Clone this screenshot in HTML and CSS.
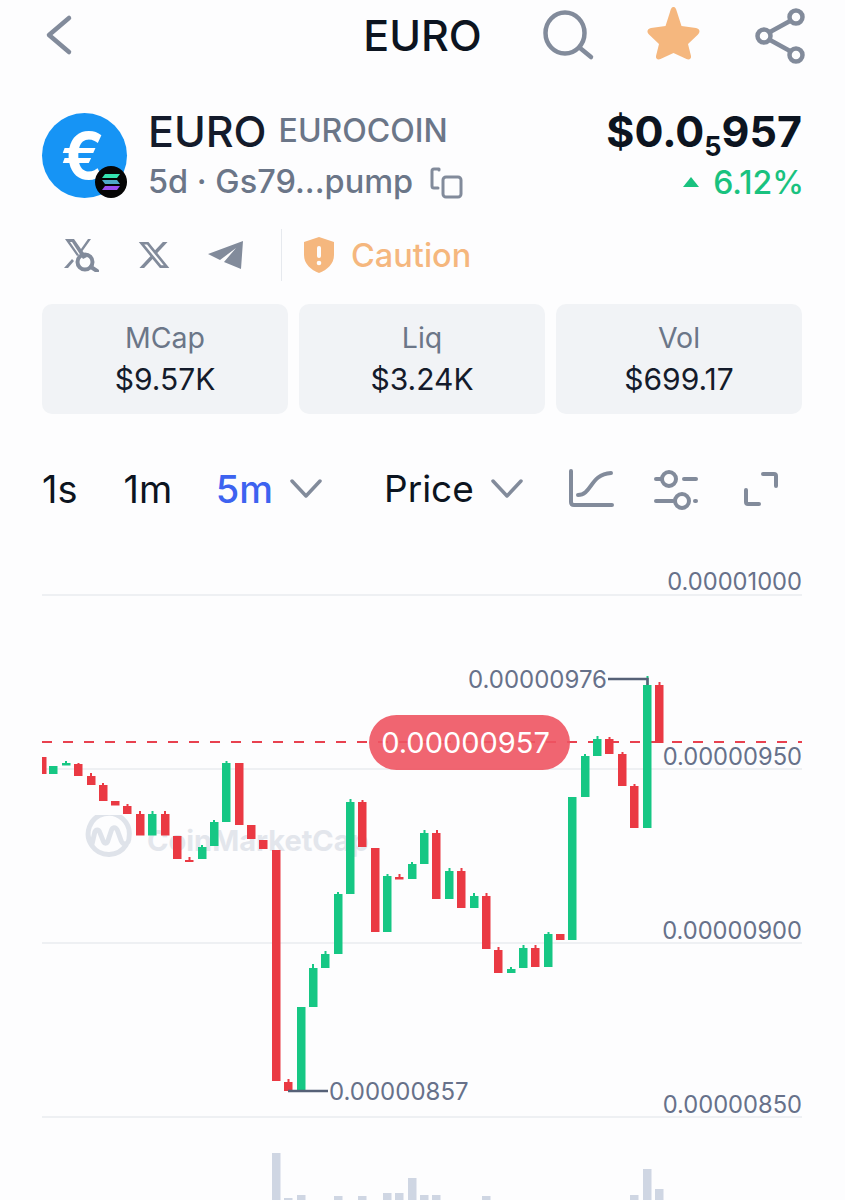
FILE: index.html
```html
<!DOCTYPE html>
<html lang="en">
<head>
<meta charset="utf-8">
<title>EURO</title>
<link rel="stylesheet" href="styles.css">
</head>
<body>
<div class="page">
  <header class="topbar">
    <svg class="ico back" viewBox="44 12 30 46"><polyline points="69,18 49,35 69,52"/></svg>
    <h1 class="title">EURO</h1>
    <div class="top-actions">
      <svg class="ico search" viewBox="540 8 56 54"><ellipse cx="565" cy="33" rx="19.5" ry="20.5"/><line x1="580" y1="48" x2="591" y2="57"/></svg>
      <svg class="star" viewBox="645 8 57 56"><path d="M673.500 8 C675 8 676 9 677 13 L681.500 27 L696 29 C700 30 700.500 33 698 35.500 L688 45 L691 57 C691.500 60 689 61 686.500 60 L673.500 54 L660.500 60 C658 61 655.500 60 656 57 L659 45 L649 35.500 C646.500 33 647 30 651 29 L665.500 27 L670 13 C671 9 672 8 673.500 8 Z"/></svg>
      <svg class="ico share" viewBox="752 4 54 60"><circle cx="796" cy="16" r="6.500"/><circle cx="764" cy="35" r="6.500"/><circle cx="796" cy="54" r="6.500"/><line x1="790" y1="20" x2="770" y2="31"/><line x1="770" y1="39" x2="790" y2="50"/></svg>
    </div>
  </header>

  <section class="token">
    <div class="avatar">
      <span class="euro">€</span>
      <svg class="chain" viewBox="0 0 32 32">
        <circle cx="16" cy="16" r="16" fill="#050505"/>
        <path d="M10 8 H25 L22 12 H7 Z" fill="#35e3b0"/>
        <path d="M7 14 H22 L25 18 H10 Z" fill="#4fa8c8"/>
        <path d="M10 20 H25 L22 24 H7 Z" fill="#9a4ff0"/>
      </svg>
    </div>
    <div class="token-info">
      <div class="name-row"><span class="sym">EURO</span><span class="full">EUROCOIN</span></div>
      <div class="addr-row">
        <span class="addr">5d · Gs79...pump</span>
        <svg class="ico copy" viewBox="429 165 35 34"><rect x="443" y="177" width="18" height="20" rx="3"/><path d="M439 170 V169 H434 Q432 169 432 171 V186 Q432 188 434 188 H438"/></svg>
      </div>
    </div>
    <div class="quote">
      <div class="price">$0.0<sub class="zeros">5</sub>957</div>
      <div class="change"><svg class="tri" viewBox="0 0 18 12"><path d="M9 1 L17 11 H1 Z"/></svg><span>6.12%</span></div>
    </div>
  </section>

  <section class="links">
    <svg class="fill-ico xq" viewBox="0 0 35 34">
      <path d="M1 1 H10 L17 11 L24 1 H27 L18.500 13 L23 19 L19 21 L8 4 H6 L15 17 L13 18 Z"/>
      <path d="M0 30 L8 21 L10 23 L4 30 Z"/>
      <circle class="ring" cx="21" cy="24" r="7.500"/>
      <line class="ring" x1="27" y1="29" x2="33" y2="33"/>
    </svg>
    <svg class="fill-ico x" viewBox="0 0 24 24" preserveAspectRatio="none"><path d="M18.244 2.250h3.308l-7.227 8.260 8.502 11.240H16.170l-5.214-6.817L4.990 21.750H1.680l7.730-8.835L1.254 2.250H8.080l4.713 6.231zm-1.161 17.520h1.833L7.084 4.126H5.117z"/></svg>
    <svg class="fill-ico tg" viewBox="207 243 38 30"><path d="M243 244 L208 257 L220 263 L236 251 L224 265 L241 272 Z"/></svg>
    <span class="sep"></span>
    <svg class="shield" viewBox="0 0 32 36"><path d="M16 0 L31 5 V18 C31 27 24 33 16 36 C8 33 1 27 1 18 V5 Z"/><rect class="mark" x="14" y="9" width="4" height="12" rx="2"/><circle class="mark" cx="16" cy="26" r="2.300"/></svg>
    <span class="caution">Caution</span>
  </section>

  <section class="stats">
    <div class="stat"><span class="stat-label">MCap</span><span class="stat-value">$9.57K</span></div>
    <div class="stat"><span class="stat-label">Liq</span><span class="stat-value">$3.24K</span></div>
    <div class="stat"><span class="stat-label">Vol</span><span class="stat-value">$699.17</span></div>
  </section>

  <nav class="tabs">
    <span class="tab t-1s">1s</span>
    <span class="tab t-1m">1m</span>
    <span class="tab active">5m</span>
    <svg class="ico chev c-5m" viewBox="0 0 32 20"><polyline points="2,2 16,17 30,2"/></svg>
    <span class="tab t-price">Price</span>
    <svg class="ico chev c-price" viewBox="0 0 32 20"><polyline points="2,2 16,17 30,2"/></svg>
    <svg class="ico tool curve" viewBox="568 468 48 40"><path d="M571 470 V501 Q571 504 574 504 H612"/><path d="M578 494 C592 494 590 473 611 472"/></svg>
    <svg class="ico tool sliders" viewBox="652 466 48 42"><line x1="656" y1="477" x2="661" y2="477"/><circle cx="669" cy="477" r="7"/><line x1="684" y1="477" x2="696" y2="477"/><line x1="656" y1="499" x2="673" y2="499"/><circle cx="682" cy="499" r="7"/><line x1="695" y1="499" x2="696" y2="499"/></svg>
    <svg class="ico tool expand" viewBox="742 469 38 38"><path d="M763 473 H774 Q776 473 776 475 V485"/><path d="M746 489 V501 Q746 503 748 503 H759"/></svg>
  </nav>

  <div class="chart">
    <svg class="watermark-logo" viewBox="0 0 48 48"><path d="M42 30 A21 21 0 1 1 45 22 C45 30 39 31 37 26 L33 15 C31 11 28 12 27 15 L23 27 C22 29 20 29 19 27 L15 17 C14 14 11 14 10 17 L7 30"/></svg>
    <span class="watermark-text">CoinMarketCap</span>
    <svg class="plot" viewBox="0 560 845 640">
      <g class="grid">
        <line x1="42" y1="595" x2="802" y2="595"/>
        <line x1="42" y1="769" x2="802" y2="769"/>
        <line x1="42" y1="943" x2="802" y2="943"/>
        <line x1="42" y1="1117" x2="802" y2="1117"/>
      </g>
      <g class="vol">
        <rect x="272" y="1153" width="8.500" height="47"/><rect x="284" y="1198" width="8.500" height="2"/><rect x="297" y="1195" width="8.500" height="5"/><rect x="334" y="1196" width="8.500" height="4"/><rect x="358" y="1196" width="8.500" height="4"/><rect x="383" y="1193" width="8.500" height="7"/><rect x="395" y="1193" width="8.500" height="7"/><rect x="408" y="1178" width="8.500" height="22"/><rect x="420" y="1195" width="8.500" height="5"/><rect x="432" y="1195" width="8.500" height="5"/><rect x="482" y="1196" width="8.500" height="4"/><rect x="630" y="1195" width="8.500" height="5"/><rect x="643" y="1169" width="8.500" height="31"/><rect x="655" y="1189" width="8.500" height="11"/>
      </g>
      <line class="last" x1="42" y1="742" x2="802" y2="742"/>
      <path class="wick-red" d="M78.500 763V766M91 773V777M103 783V786M127.500 804V807M140 811V815M165 811V815M189.500 857V860M288.500 1079V1083M362.500 800V803M399.500 874V877M437 830V834M461.500 868V872M486.500 893V897M498.500 947V951M535.500 945V949M609.500 737V740M622.500 752V755M634.500 784V787M659.500 682V686"/>
      <path class="wick-green" d="M66 761V764M152.500 811V815M202 845V848M214 820V823M226.500 761V764M313 964V969M325.500 951V955M338 892V895M350.500 799V803M387.500 874V877M412 862V865M424.500 830V834M449.500 868V872M474 893V897M511 967V970M523.500 945V949M548.500 932V935M585 754V757M597.500 736V740M647.500 676V686"/>
      <g class="down">
        <rect x="42" y="757" width="4.500" height="17"/><rect x="74" y="764" width="8.500" height="12"/><rect x="87" y="776" width="8.500" height="9"/><rect x="99" y="785" width="8.500" height="16"/><rect x="111" y="801" width="8.500" height="4.500"/><rect x="123" y="806" width="8.500" height="8"/><rect x="136" y="814" width="8.500" height="21.500"/><rect x="161" y="814" width="8.500" height="21.500"/><rect x="173" y="836" width="8.500" height="23"/><rect x="185" y="860" width="8.500" height="2"/><rect x="235" y="763" width="8.500" height="62"/><rect x="247" y="825" width="8.500" height="14"/><rect x="259" y="840" width="8.500" height="9"/><rect x="272" y="850" width="8.500" height="231"/><rect x="284" y="1082" width="8.500" height="9"/><rect x="358" y="802" width="8.500" height="45"/><rect x="371" y="848" width="8.500" height="84"/><rect x="395" y="877" width="8.500" height="2.500"/><rect x="432" y="833" width="8.500" height="66"/><rect x="457" y="871" width="8.500" height="37"/><rect x="482" y="896" width="8.500" height="53"/><rect x="494" y="950" width="8.500" height="23"/><rect x="531" y="948" width="8.500" height="19"/><rect x="556" y="934" width="8.500" height="6"/><rect x="605" y="739" width="8.500" height="15"/><rect x="618" y="754" width="8.500" height="32"/><rect x="630" y="786" width="8.500" height="42"/><rect x="655" y="685" width="8.500" height="58"/>
      </g>
      <g class="up">
        <rect x="49" y="766" width="8.500" height="8"/><rect x="62" y="763" width="8.500" height="2.500"/><rect x="148" y="814" width="8.500" height="21.500"/><rect x="198" y="847" width="8.500" height="12"/><rect x="210" y="822" width="8.500" height="24"/><rect x="222" y="763" width="8.500" height="59"/><rect x="297" y="1007" width="8.500" height="84"/><rect x="309" y="968" width="8.500" height="39"/><rect x="321" y="954" width="8.500" height="14"/><rect x="334" y="894" width="8.500" height="60"/><rect x="346" y="802" width="8.500" height="92"/><rect x="383" y="876" width="8.500" height="56"/><rect x="408" y="864" width="8.500" height="15"/><rect x="420" y="833" width="8.500" height="31"/><rect x="445" y="871" width="8.500" height="28"/><rect x="470" y="896" width="8.500" height="12"/><rect x="507" y="969" width="8.500" height="4"/><rect x="519" y="948" width="8.500" height="20"/><rect x="544" y="934" width="8.500" height="33"/><rect x="568" y="797" width="8.500" height="143"/><rect x="581" y="756" width="8.500" height="41"/><rect x="593" y="739" width="8.500" height="17"/><rect x="643" y="685" width="8.500" height="143"/>
      </g>
      <path class="leader" d="M608 679 H647.500 V685"/>
      <path class="leader" d="M288 1091 H328"/>
    </svg>
    <span class="axis a-1000">0.00001000</span>
    <span class="axis a-950">0.00000950</span>
    <span class="axis a-900">0.00000900</span>
    <span class="axis a-850">0.00000850</span>
    <span class="extreme high">0.00000976</span>
    <span class="extreme low">0.00000857</span>
    <span class="last-pill">0.00000957</span>
  </div>
</div>
</body>
</html>
```
FILE: styles.css
```css
* { box-sizing: border-box; }
html, body { margin: 0; padding: 0; height: 1200px; overflow: hidden; }
body { background: #fdfdfe; font-family: "Inter", "Liberation Sans", sans-serif; color: #0c1420; }
.page { width: 845px; height: 1200px; overflow: hidden; }

.ico { fill: none; stroke: #828b9b; stroke-width: 4.5; stroke-linecap: round; stroke-linejoin: round; display: block; }

.topbar { height: 70px; padding: 0 42px; display: grid; grid-template-columns: 1fr auto 1fr; align-items: center; }
.back { width: 30px; height: 46px; margin-left: 2px; }
.title { margin: 0; font-size: 43px; line-height: 48px; font-weight: 500; }
.top-actions { display: flex; align-items: center; justify-content: space-between; padding-left: 58px; margin-right: -3px; }
.search { width: 56px; height: 54px; }
.star { width: 57px; height: 56px; fill: #f5b77e; display: block; }
.share { width: 54px; height: 60px; }

.token { margin-top: 43px; padding: 0 43px 0 42px; display: flex; align-items: flex-start; }
.avatar { position: relative; width: 85px; height: 85px; border-radius: 50%; background: #1694f5; display: flex; align-items: center; justify-content: center; flex: none; }
.euro { color: #fff; font-size: 64px; line-height: 85px; font-weight: 700; margin-left: -3px; }
.chain { position: absolute; right: 0; bottom: 0; width: 32px; height: 32px; }
.token-info { margin-left: 21px; flex: 1; }
.name-row { display: flex; align-items: center; height: 36px; }
.sym { font-size: 43px; line-height: 36px; font-weight: 500; color: #141b2b; }
.full { margin-left: 12px; font-size: 32px; line-height: 36px; font-weight: 500; color: #6b7688; }
.addr-row { margin-top: 15px; display: flex; align-items: center; height: 36px; }
.addr { font-size: 32.5px; line-height: 36px; font-weight: 500; color: #6b7688; }
.copy { width: 35px; height: 34px; margin-left: 16px; stroke-width: 3; }
.quote { display: flex; flex-direction: column; align-items: flex-end; }
.price { height: 36px; font-size: 43px; line-height: 36px; font-weight: 700; color: #0c1420; white-space: nowrap; }
.zeros { font-size: 27px; line-height: 0; vertical-align: -9px; }
.change { margin-top: 15px; margin-right: -2px; display: flex; align-items: center; height: 36px; font-size: 32px; font-weight: 500; color: #19c27f; }
.tri { width: 18px; height: 12px; margin-right: 13px; fill: #19c27f; }

.links { margin-top: 28px; padding-left: 64px; display: flex; align-items: center; height: 54px; }
.fill-ico { fill: #828b9b; display: block; }
.xq { width: 35px; height: 34px; }
.ring { fill: none; stroke: #828b9b; stroke-width: 4; stroke-linecap: round; }
.x { width: 34px; height: 32px; margin-left: 38px; }
.tg { width: 38px; height: 30px; margin-left: 36px; }
.sep { width: 1px; height: 52px; margin-left: 36px; background: #e6e9ee; }
.shield { width: 32px; height: 36px; margin-left: 21px; fill: #f5b77e; }
.mark { fill: #fdfdfe; }
.caution { margin-left: 16px; font-size: 32.5px; font-weight: 500; color: #f5b77e; }

.stats { margin-top: 22px; padding: 0 43px 0 42px; display: grid; grid-template-columns: repeat(3, 1fr); gap: 11px; }
.stat { height: 110px; padding-bottom: 2px; border-radius: 10px; background: #f1f3f6; display: flex; flex-direction: column; align-items: center; justify-content: center; gap: 7px; }
.stat-label { font-size: 28.5px; line-height: 34px; color: #6b7688; }
.stat-value { font-size: 30px; line-height: 34px; color: #141b2b; }

.tabs { margin-top: 47px; padding-left: 42px; height: 56px; display: flex; align-items: center; }
.tab { font-size: 38px; line-height: 44px; }
.t-1m { margin-left: 46px; }
.active { margin-left: 43.5px; color: #3d63f0; font-weight: 500; }
.chev { width: 32px; height: 20px; stroke-width: 3.500; }
.c-5m { margin-left: 17px; }
.t-price { margin-left: 62px; font-size: 37px; }
.c-price { margin-left: 17px; }
.tool { stroke-width: 4; }
.curve { width: 48px; height: 40px; margin-left: 45px; }
.sliders { width: 48px; height: 42px; margin-left: 36px; }
.expand { width: 38px; height: 38px; margin-left: 42px; }

.chart { position: relative; margin-top: 43px; width: 845px; height: 640px; }
.plot { position: absolute; left: 0; top: 0; width: 845px; height: 640px; display: block; }
.grid line { stroke: #eef0f3; stroke-width: 2; }
.vol rect { fill: #cfd6e3; }
.last { stroke: #e8414f; stroke-width: 2; stroke-dasharray: 10 11; }
.down rect { fill: #ea3943; }
.up rect { fill: #16c784; }
.wick-red { stroke: #ea3943; stroke-width: 2; fill: none; }
.wick-green { stroke: #16c784; stroke-width: 2; fill: none; }
.leader { stroke: #566177; stroke-width: 2.500; fill: none; }

.watermark-logo { position: absolute; left: 85px; top: 255px; width: 47px; height: 48px; fill: none; stroke: #dfe3ea; stroke-width: 5; stroke-linecap: round; stroke-linejoin: round; }
.watermark-text { position: absolute; left: 147px; top: 264px; font-size: 29px; line-height: 34px; font-weight: 700; color: #e3e6ec; white-space: nowrap; }

.axis, .extreme { position: absolute; font-size: 24px; line-height: 28px; color: #67718a; white-space: nowrap; }
.axis { right: 43px; font-size: 23.7px; }
.a-1000 { top: 8px; }
.a-950 { top: 183px; }
.a-900 { top: 357px; }
.a-850 { top: 531px; }
.high { right: 238px; top: 106px; }
.low { left: 329px; top: 518px; }
.last-pill { position: absolute; left: 369px; top: 155px; width: 201px; height: 55px; padding-right: 8px; border-radius: 28px; background: rgba(238, 84, 98, 0.9); color: #fff; font-size: 29px; line-height: 55px; text-align: center; }
```
